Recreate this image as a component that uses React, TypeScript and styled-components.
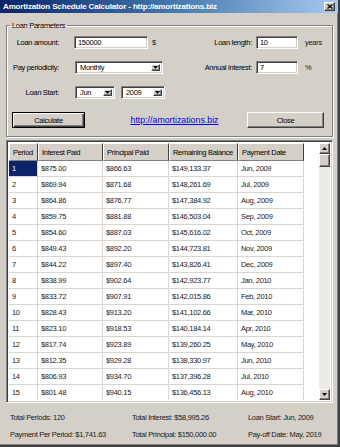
import React from 'react';
import styled, { createGlobalStyle, css } from 'styled-components';

const GlobalStyle = createGlobalStyle`
  html, body {
    margin: 0;
    padding: 0;
    background: #d4d0c8;
  }
  * {
    box-sizing: border-box;
  }
`;

const FACE = '#d4d0c8';
const SHADOW = '#808080';
const DARK = '#404040';

const raised = css`
  background: ${FACE};
  border: 1px solid;
  border-color: #fff ${DARK} ${DARK} #fff;
  box-shadow: inset -1px -1px ${SHADOW};
`;

const sunken = css`
  background: #fff;
  border: 1px solid;
  border-color: ${SHADOW} #fff #fff ${SHADOW};
  box-shadow: inset 1px 1px ${DARK}, inset -1px -1px ${FACE};
`;

const Window = styled.div`
  width: 340px;
  height: 447px;
  display: flex;
  flex-direction: column;
  background: ${FACE};
  border-right: 2px solid ${DARK};
  border-bottom: 2px solid ${DARK};
  box-shadow: inset -1px -1px ${SHADOW};
  font-family: 'Liberation Sans', Arial, sans-serif;
  font-size: 7.5px;
  letter-spacing: -0.3px;
  color: #000;
  overflow: hidden;
`;

const TitleBar = styled.div`
  height: 13px;
  flex: none;
  display: flex;
  align-items: center;
  justify-content: space-between;
  padding: 0 3px 0 3px;
  background: linear-gradient(90deg, #0a246a 0%, #3a6ea5 45%, #a6caf0 100%);
  color: #fff;
  font-weight: bold;
  font-size: 8px;
  letter-spacing: -0.15px;
`;

const CloseBox = styled.div`
  ${raised};
  width: 11px;
  height: 9px;
  display: flex;
  align-items: center;
  justify-content: center;
`;

const Body = styled.div`
  flex: 1;
  display: flex;
  flex-direction: column;
  padding: 8px 5px 0 6px;
`;

const Group = styled.fieldset`
  margin: 0;
  padding: 6px 0 8px 0;
  border: 1px solid ${SHADOW};
  box-shadow: inset 1px 1px #fff, 1px 1px #fff;
  min-width: 0;
`;

const Legend = styled.legend`
  margin-left: 3px;
  padding: 0 2px;
  line-height: 9px;
`;

const FormGrid = styled.div`
  display: grid;
  grid-template-columns: 56px 103px 90px 42px 1fr;
  row-gap: 12px;
  grid-auto-rows: 13px;
  align-items: center;
`;

const FieldLabel = styled.div`
  text-align: right;
  white-space: nowrap;
  padding-right: ${({ $gap }: { $gap?: number }) => $gap ?? 4}px;
`;

const Controls = styled.div`
  display: flex;
  align-items: center;
  gap: ${({ $gap }: { $gap?: number }) => $gap ?? 0}px;
  padding-left: ${({ $indent }: { $indent?: number }) => $indent ?? 0}px;
  height: 13px;
`;

const TextBox = styled.div<{ $w: number }>`
  ${sunken};
  width: ${({ $w }) => $w}px;
  height: 13px;
  padding: 1px 0 0 3px;
  display: flex;
  align-items: center;
  line-height: 1;
`;

const Unit = styled.span<{ $pad?: number }>`
  padding-left: ${({ $pad }) => $pad ?? 4}px;
  color: #222;
`;

const SelectBox = styled.div<{ $w: number }>`
  ${sunken};
  width: ${({ $w }) => $w}px;
  height: 13px;
  display: flex;
  align-items: stretch;
  padding: 2px;
`;

const SelectText = styled.div`
  flex: 1;
  display: flex;
  align-items: center;
  padding-left: 2px;
`;

const ArrowBtn = styled.div<{ $w?: number }>`
  ${raised};
  width: ${({ $w }) => $w ?? 9}px;
  display: flex;
  align-items: center;
  justify-content: center;
`;

const ButtonRow = styled.div`
  display: grid;
  grid-template-columns: 73px 1fr 77px;
  align-items: center;
  margin-top: 13px;
  padding: 0 8px 0 5px;
  height: 16px;
`;

const Button = styled.div<{ $default?: boolean }>`
  height: 16px;
  display: flex;
  align-items: center;
  justify-content: center;
  background: ${FACE};
  ${({ $default }) =>
    $default
      ? css`
          border: 1px solid #000;
          box-shadow: inset 1px 1px #fff, inset -1px -1px ${DARK}, inset -2px -2px ${SHADOW};
        `
      : css`
          border: 1px solid;
          border-color: #fff ${DARK} ${DARK} #fff;
          box-shadow: inset -1px -1px ${SHADOW};
        `}
`;

const Link = styled.a`
  justify-self: center;
  color: #0000ee;
  text-decoration: underline;
  font-size: 8.8px;
  letter-spacing: 0;
  margin-left: 17px;
`;

const ListFrame = styled.div`
  ${sunken};
  margin-top: 3px;
  height: 263px;
  padding: 2px;
  display: flex;
  overflow: hidden;
`;

const ListArea = styled.div`
  flex: 1;
  background: #fff;
  overflow: hidden;
`;

const Row = styled.div<{ $header?: boolean }>`
  display: grid;
  grid-template-columns: 29px 65px 66px 69px 66px;
  height: ${({ $header }) => ($header ? 18 : 16)}px;
`;

const HeadCell = styled.div`
  background: ${FACE};
  border: 1px solid;
  border-color: #fff ${DARK} ${SHADOW} #fff;
  display: flex;
  align-items: center;
  padding-left: 3px;
  white-space: nowrap;
  overflow: hidden;
`;

const Cell = styled.div<{ $selected?: boolean }>`
  display: flex;
  align-items: center;
  padding-left: 3px;
  border-right: 1px solid #d8d6d0;
  border-bottom: 1px solid #d8d6d0;
  white-space: nowrap;
  color: #1a1a1a;
  ${({ $selected }) =>
    $selected &&
    css`
      background: #0a246a;
      color: #fff;
    `}
`;

const ScrollBar = styled.div`
  width: 11px;
  display: flex;
  flex-direction: column;
  background: #ecebe7;
`;

const ScrollBtn = styled.div<{ $h?: number }>`
  ${raised};
  height: ${({ $h }) => $h ?? 11}px;
  flex: none;
  display: flex;
  align-items: center;
  justify-content: center;
`;

const Track = styled.div`
  flex: 1;
`;

const Summary = styled.div`
  display: grid;
  grid-template-columns: 122px 116px 1fr;
  grid-auto-rows: 17px;
  align-items: center;
  padding: 6px 0 0 4px;
  color: #1a1a1a;
`;

const Triangle = ({ up }: { up?: boolean }) => (
  <svg width="5" height="3" viewBox="0 0 5 3">
    <polygon points={up ? '0,3 5,3 2.5,0' : '0,0 5,0 2.5,3'} fill="#000" />
  </svg>
);

const CloseGlyph = () => (
  <svg width="6" height="5" viewBox="0 0 6 5">
    <path d="M0.5 0.5 L5.5 4.5 M5.5 0.5 L0.5 4.5" stroke="#000" strokeWidth="1.3" />
  </svg>
);

const Select = ({ width, value }: { width: number; value: string }) => (
  <SelectBox $w={width}>
    <SelectText>{value}</SelectText>
    <ArrowBtn>
      <Triangle />
    </ArrowBtn>
  </SelectBox>
);

const rows: [string, string, string, string, string][] = [
  ['1', '$875.00', '$866.63', '$149,133.37', 'Jun, 2009'],
  ['2', '$869.94', '$871.68', '$148,261.69', 'Jul, 2009'],
  ['3', '$864.86', '$876.77', '$147,384.92', 'Aug, 2009'],
  ['4', '$859.75', '$881.88', '$146,503.04', 'Sep, 2009'],
  ['5', '$854.60', '$887.03', '$145,616.02', 'Oct, 2009'],
  ['6', '$849.43', '$892.20', '$144,723.81', 'Nov, 2009'],
  ['7', '$844.22', '$897.40', '$143,826.41', 'Dec, 2009'],
  ['8', '$838.99', '$902.64', '$142,923.77', 'Jan, 2010'],
  ['9', '$833.72', '$907.91', '$142,015.86', 'Feb, 2010'],
  ['10', '$828.43', '$913.20', '$141,102.66', 'Mar, 2010'],
  ['11', '$823.10', '$918.53', '$140,184.14', 'Apr, 2010'],
  ['12', '$817.74', '$923.89', '$139,260.25', 'May, 2010'],
  ['13', '$812.35', '$929.28', '$138,330.97', 'Jun, 2010'],
  ['14', '$806.93', '$934.70', '$137,396.28', 'Jul, 2010'],
  ['15', '$801.48', '$940.15', '$136,456.13', 'Aug, 2010'],
];

const headers = ['Period', 'Interest Paid', 'Principal Paid', 'Remaining Balance', 'Payment Date'];

export default function App() {
  return (
    <>
      <GlobalStyle />
      <Window>
        <TitleBar>
          <span>Amortization Schedule Calculator - http://amortizations.biz</span>
          <CloseBox>
            <CloseGlyph />
          </CloseBox>
        </TitleBar>
        <Body>
          <Group>
            <Legend>Loan Parameters</Legend>
            <FormGrid>
              <FieldLabel>Loan amount:</FieldLabel>
              <Controls $indent={11}>
                <TextBox $w={74}>150000</TextBox>
                <Unit>$</Unit>
              </Controls>
              <FieldLabel>Loan length:</FieldLabel>
              <TextBox $w={42}>10</TextBox>
              <Unit $pad={7}>years</Unit>

              <FieldLabel>Pay periodicity:</FieldLabel>
              <Controls $indent={12}>
                <Select width={88} value="Monthly" />
              </Controls>
              <FieldLabel>Annual interest:</FieldLabel>
              <TextBox $w={42}>7</TextBox>
              <Unit $pad={7}>%</Unit>

              <FieldLabel>Loan Start:</FieldLabel>
              <Controls $indent={12} $gap={6}>
                <Select width={40} value="Jun" />
                <Select width={44} value="2009" />
              </Controls>
              <div />
              <div />
              <div />
            </FormGrid>
            <ButtonRow>
              <Button $default>Calculate</Button>
              <Link>http://amortizations.biz</Link>
              <Button>Close</Button>
            </ButtonRow>
          </Group>

          <ListFrame>
            <ListArea>
              <Row $header>
                {headers.map((h) => (
                  <HeadCell key={h}>{h}</HeadCell>
                ))}
              </Row>
              {rows.map((r, i) => (
                <Row key={r[0]}>
                  {r.map((v, j) => (
                    <Cell key={j} $selected={i === 0 && j === 0}>
                      {v}
                    </Cell>
                  ))}
                </Row>
              ))}
            </ListArea>
            <ScrollBar>
              <ScrollBtn>
                <Triangle up />
              </ScrollBtn>
              <ScrollBtn $h={13} />
              <Track />
              <ScrollBtn>
                <Triangle />
              </ScrollBtn>
            </ScrollBar>
          </ListFrame>

          <Summary>
            <span>Total Periods: 120</span>
            <span>Total Interest: $58,995.26</span>
            <span>Loan Start: Jun, 2009</span>
            <span>Payment Per Period: $1,741.63</span>
            <span>Total Principal: $150,000.00</span>
            <span>Pay-off Date: May, 2019</span>
          </Summary>
        </Body>
      </Window>
    </>
  );
}
